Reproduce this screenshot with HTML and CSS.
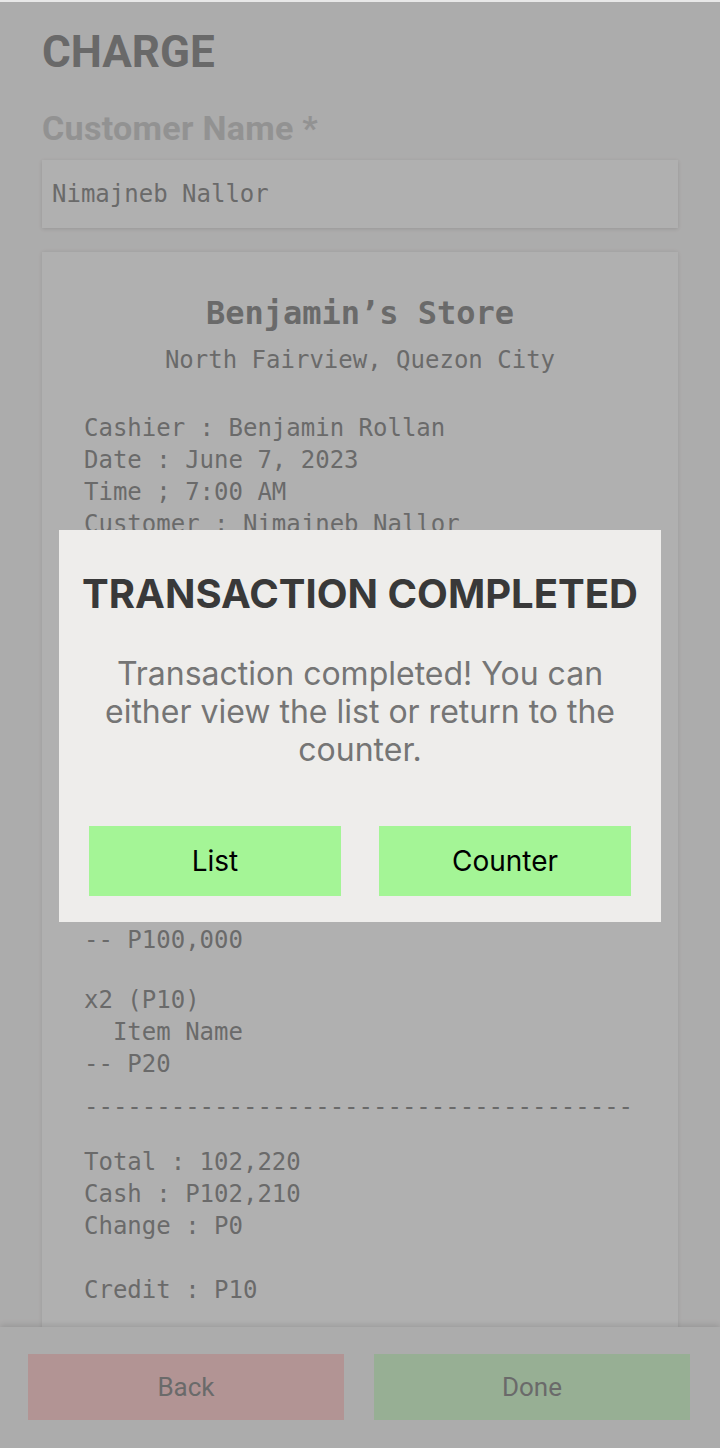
FILE: index.html
```html
<!DOCTYPE html>
<html lang="en">
<head>
<meta charset="utf-8">
<title>Charge</title>
<link rel="stylesheet" href="styles.css">
</head>
<body>
<div class="app">
  <main class="screen">
    <h1 class="page-title">CHARGE</h1>
    <label class="field-label" for="customer">Customer Name *</label>
    <div class="field-input" id="customer">Nimajneb Nallor</div>

    <section class="receipt">
      <h2 class="store-name">Benjamin’s Store</h2>
      <p class="store-address">North Fairview, Quezon City</p>

      <div class="info">
        <div class="line">Cashier : Benjamin Rollan</div>
        <div class="line">Date : June 7, 2023</div>
        <div class="line">Time ; 7:00 AM</div>
        <div class="line">Customer : Nimajneb Nallor</div>
      </div>

      <div class="divider divider-top">--------------------------------------</div>

      <div class="items">
        <div class="item">
          <div class="line">x2 (P1,000)</div>
          <div class="line">  Item Name</div>
          <div class="line">-- P2,000</div>
        </div>
        <div class="item">
          <div class="line">x1 (P200)</div>
          <div class="line">  Item Name</div>
          <div class="line">-- P200</div>
        </div>
        <div class="item">
          <div class="line">x1 (P100,000)</div>
          <div class="line">  Item Name</div>
          <div class="line">-- P100,000</div>
        </div>
        <div class="item">
          <div class="line">x2 (P10)</div>
          <div class="line">  Item Name</div>
          <div class="line">-- P20</div>
        </div>
      </div>

      <div class="divider">--------------------------------------</div>

      <div class="totals">
        <div class="line">Total : 102,220</div>
        <div class="line">Cash : P102,210</div>
        <div class="line">Change : P0</div>
        <div class="line"> </div>
        <div class="line">Credit : P10</div>
      </div>
    </section>
  </main>

  <footer class="actions">
    <button class="btn btn-back">Back</button>
    <button class="btn btn-done">Done</button>
  </footer>
</div>

<div class="overlay">
  <div class="dialog" role="dialog">
    <h2 class="dialog-title">TRANSACTION COMPLETED</h2>
    <p class="dialog-text">Transaction completed! You can either view the list or return to the counter.</p>
    <div class="dialog-actions">
      <button class="dialog-btn">List</button>
      <button class="dialog-btn">Counter</button>
    </div>
  </div>
</div>
</body>
</html>
```

FILE: styles.css
```css
* { box-sizing: border-box; }

html, body {
  margin: 0;
  padding: 0;
  height: 100%;
}

body {
  background: #f7f6f6;
  border-top: 2px solid #e8e8e8;
  font-family: Roboto, "Liberation Sans", sans-serif;
  overflow: hidden;
}

.app {
  height: 100%;
  display: flex;
  flex-direction: column;
}

.screen {
  flex: 1;
  min-height: 0;
  overflow-y: auto;
  scrollbar-width: none;
  padding: 0 42px;
}

.page-title {
  margin: 28px 0 0;
  font-family: Roboto, sans-serif;
  font-weight: 700;
  font-size: 44px;
  line-height: 44px;
  color: #979797;
}

.field-label {
  display: block;
  margin-top: 37px;
  font-family: Roboto, sans-serif;
  font-weight: 700;
  font-size: 34px;
  line-height: 34px;
  letter-spacing: 0.3px;
  color: #d2d2d2;
}

.field-input {
  margin-top: 15px;
  height: 68px;
  display: flex;
  align-items: center;
  padding-left: 10px;
  background: #fdfdfd;
  box-shadow: 0 1px 4px rgba(0, 0, 0, 0.12);
  font-family: "DejaVu Sans Mono", "Liberation Mono", monospace;
  font-size: 24px;
  color: #999999;
}

.receipt {
  margin-top: 24px;
  display: flex;
  flex-direction: column;
  background: #fdfdfd;
  box-shadow: 0 0 4px rgba(0, 0, 0, 0.1);
  padding: 41px 42px 60px;
  font-family: "DejaVu Sans Mono", "Liberation Mono", monospace;
  font-size: 24px;
  line-height: 32px;
  color: #999999;
}

.store-name {
  margin: 0;
  text-align: center;
  font-size: 32px;
  line-height: 40px;
  font-weight: 700;
}

.store-address {
  margin: 11px 0 0;
  text-align: center;
}

.info {
  margin-top: 36px;
}

.line {
  white-space: pre;
  height: 32px;
}

.divider {
  white-space: pre;
  overflow: hidden;
  margin: 11px 0 23px;
}

.divider-top {
  margin-top: 17px;
}

.items {
  display: flex;
  flex-direction: column;
  gap: 28px;
}

.actions {
  flex: none;
  display: grid;
  grid-template-columns: 316px 316px;
  gap: 30px;
  padding: 27px 30px 28px 28px;
  background: #f7f6f6;
  box-shadow: 0 -2px 6px rgba(0, 0, 0, 0.12);
  position: relative;
}

.btn {
  height: 66px;
  border: 0;
  font-family: Roboto, sans-serif;
  font-size: 26px;
  color: #999999;
}

.btn-back { background: #ffd5d5; }
.btn-done { background: #d9fbd5; }

.overlay {
  position: fixed;
  inset: 2px 0 0 0;
  padding-top: 2px;
  background: rgba(0, 0, 0, 0.3);
  display: flex;
  align-items: center;
  justify-content: center;
}

.dialog {
  width: 602px;
  background: #eeedeb;
  padding: 40px 30px 26px;
  font-family: Inter, "Noto Sans", sans-serif;
  text-align: center;
}

.dialog-title {
  margin: 0 -10px;
  white-space: nowrap;
  font-size: 40px;
  line-height: 48px;
  font-weight: 700;
  color: #393939;
}

.dialog-text {
  margin: 37px 0 0;
  font-size: 32px;
  line-height: 38px;
  color: #757575;
}

.dialog-actions {
  margin-top: 57px;
  display: grid;
  grid-template-columns: 1fr 1fr;
  gap: 38px;
}

.dialog-btn {
  height: 70px;
  border: 0;
  background: #a4f596;
  font-family: Inter, "Noto Sans", sans-serif;
  font-size: 28px;
  color: #000;
}
```
